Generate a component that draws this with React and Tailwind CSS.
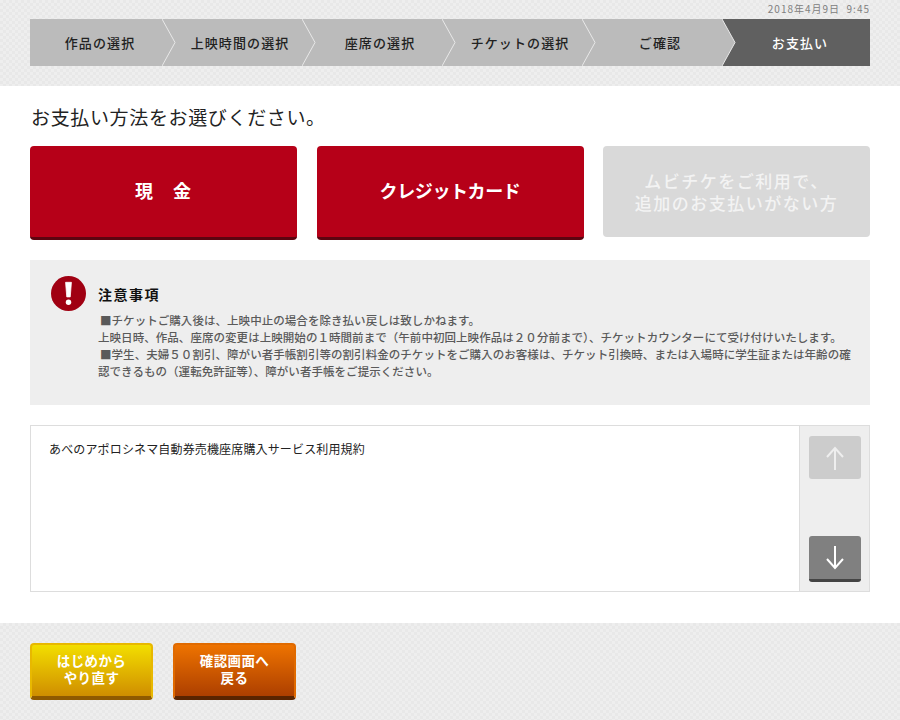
const font = { fontFamily: '"Noto Sans CJK JP", "Noto Sans", sans-serif' };

const steps = ["作品の選択", "上映時間の選択", "座席の選択", "チケットの選択", "ご確認", "お支払い"];

function Step({ label, index }) {
  const active = index === steps.length - 1;
  return (
    <div className="relative flex h-full flex-1 items-center justify-center">
      {active && (
        <svg className="absolute top-0 -left-[8px] h-[47px] w-[148px]" viewBox="0 0 148 47">
          <polygon points="0,0 148,0 148,47 0,47 13,23.5" fill="#606060" />
        </svg>
      )}
      {index > 0 && (
        <svg className="absolute top-0 -left-[8px] h-[47px] w-[14px]" viewBox="0 0 14 47">
          <polyline points="0,0 13,23.5 0,47" fill="none" stroke="#e8e8e8" strokeWidth="1" />
        </svg>
      )}
      <span className={`relative text-[13px] font-medium tracking-[1.1px] ${active ? "text-white" : "text-[#222]"}`}>{label}</span>
    </div>
  );
}

function PayButton({ children, className }) {
  return (
    <button className={`flex h-[94px] w-[267px] items-center justify-center rounded-[4px] border-b-[3px] border-[#5c0410] bg-[#b60018] pb-[3px] text-[18px] font-bold text-white ${className}`}>
      {children}
    </button>
  );
}

function FootButton({ children, className }) {
  return (
    <button className={`flex h-[57px] w-[123px] items-center justify-center rounded-[4px] border-x-[2px] border-t-[2px] border-b-[4px] pb-[3px] text-[13.5px] leading-[17px] font-bold tracking-[0.4px] text-white ${className}`}>
      <span>{children}</span>
    </button>
  );
}

export default function App() {
  return (
    <div style={font} className="flex h-[720px] w-[900px] flex-col overflow-hidden bg-white">
      <header className="h-[86px] shrink-0 bg-[#ebebeb] bg-[repeating-conic-gradient(#e8e8e8_0_25%,#eeeeee_0_50%)] bg-[length:6px_6px] px-[30px]">
        <p className="h-[19px] pt-[2px] text-right text-[10px] leading-[14px] tracking-[1px] text-[#808080]">2018年4月9日&nbsp;&nbsp;9:45</p>
        <nav className="flex h-[47px] bg-[#bbbbbb]">
          {steps.map((label, i) => (
            <Step key={label} label={label} index={i} />
          ))}
        </nav>
      </header>

      <main className="flex-1 px-[30px]">
        <h1 className="pt-[17px] pl-[1px] text-[19px] leading-[28px] font-normal tracking-[0.65px] text-[#222]">お支払い方法をお選びください。</h1>
        <div className="mt-[15px] flex justify-between">
          <PayButton className="tracking-[1px]">現&emsp;金</PayButton>
          <PayButton className="tracking-[-0.4px]">クレジットカード</PayButton>
          <div className="flex h-[91px] w-[267px] items-center justify-center rounded-[4px] bg-[#d9d9d9] text-center text-[17px] leading-[22px] font-medium tracking-[1.5px] text-[#f3f3f3]">
            ムビチケをご利用で、<br />追加のお支払いがない方
          </div>
        </div>

        <section className="mt-[20px] flex h-[145px] gap-[12px] bg-[#eeeeee] pt-[16px] pl-[21px]">
          <svg className="h-[35px] w-[35px] shrink-0" viewBox="0 0 36 36">
            <circle cx="18" cy="18" r="18" fill="#a00012" />
            <path d="M15 6.5 h6 l-1.2 15 h-3.6 z" fill="#fff" strokeLinejoin="round" stroke="#fff" strokeWidth="0.8" />
            <circle cx="18" cy="27" r="2.8" fill="#fff" />
          </svg>
          <div>
            <h2 className="pt-[8px] text-[14px] leading-[20px] font-bold tracking-[1.5px] text-[#111]">注意事項</h2>
            <p className="mt-[8px] text-[11.5px] leading-[17px] font-medium tracking-[0.05px] text-[#5a5a5a]">
              <span className="pl-[2px]">■チケットご購入後は、上映中止の場合を除き払い戻しは致しかねます。</span><br />
              上映日時、作品、座席の変更は上映開始の１時間前まで（午前中初回上映作品は２０分前まで）、チケットカウンターにて受け付けいたします。<br />
              <span className="pl-[2px]">■学生、夫婦５０割引、障がい者手帳割引等の割引料金のチケットをご購入のお客様は、チケット引換時、または入場時に学生証または年齢の確</span><br />
              認できるもの（運転免許証等）、障がい者手帳をご提示ください。
            </p>
          </div>
        </section>

        <section className="mt-[20px] flex h-[167px] border border-[#dddddd]">
          <p className="flex-1 pt-[14px] pl-[18px] text-[12px] leading-[18px] tracking-[0.15px] text-[#222]">あべのアポロシネマ自動券売機座席購入サービス利用規約</p>
          <div className="flex w-[70px] flex-col justify-between border-l border-[#dddddd] bg-[#eeeeee] pt-[10px] pb-[9px] pl-[9px]">
            <button className="flex h-[43px] w-[52px] items-center justify-center rounded-[3px] bg-[#cccccc]">
              <svg width="18" height="24" viewBox="0 0 18 24" fill="none" stroke="#eeeeee" strokeWidth="2">
                <path d="M9 24 V2 M1 11 L9 2 L17 11" />
              </svg>
            </button>
            <button className="flex h-[46px] w-[52px] items-center justify-center rounded-[3px] border-b-[3px] border-[#444444] bg-[#808080]">
              <svg width="18" height="24" viewBox="0 0 18 24" fill="none" stroke="#ffffff" strokeWidth="2">
                <path d="M9 0 V22 M1 13 L9 22 L17 13" />
              </svg>
            </button>
          </div>
        </section>
      </main>

      <footer className="flex h-[97px] shrink-0 gap-[20px] bg-[#ebebeb] bg-[repeating-conic-gradient(#e8e8e8_0_25%,#eeeeee_0_50%)] bg-[length:6px_6px] px-[30px] pt-[20px]">
        <FootButton className="border-x-[#e8b800] border-t-[#e8b800] border-b-[#8f5a00] bg-gradient-to-b from-[#f2de00] to-[#cf8e00]">はじめから<br />やり直す</FootButton>
        <FootButton className="border-x-[#e06a00] border-t-[#e06a00] border-b-[#5a2400] bg-gradient-to-b from-[#ee7300] to-[#ad3f00]">確認画面へ<br />戻る</FootButton>
      </footer>
    </div>
  );
}
